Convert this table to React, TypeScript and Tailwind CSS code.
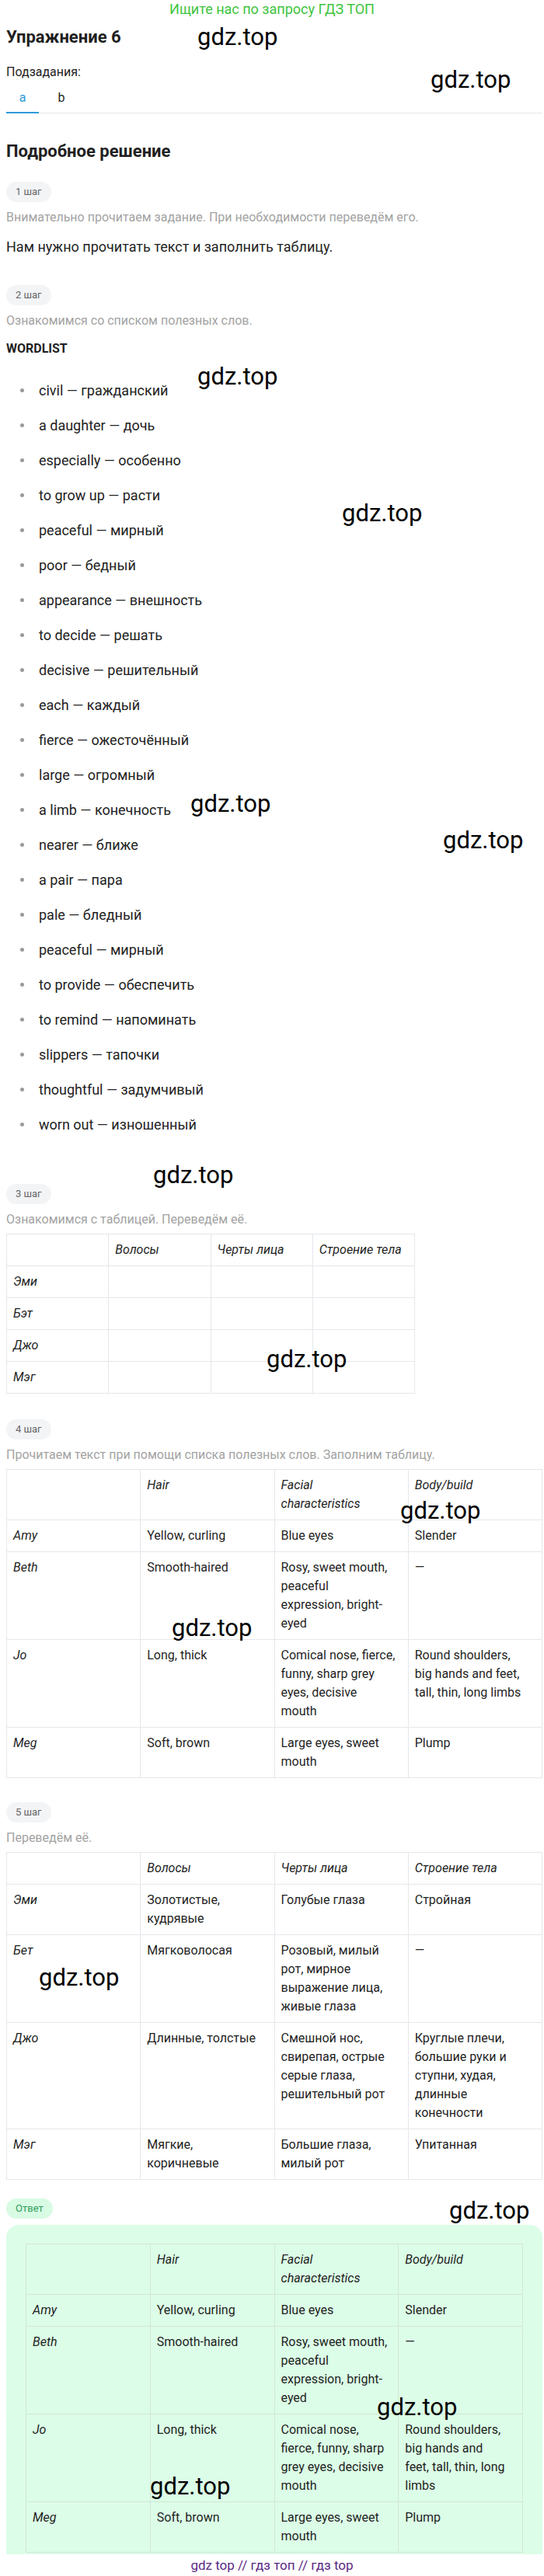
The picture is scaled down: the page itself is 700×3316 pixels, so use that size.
const words = [
  "civil — гражданский",
  "a daughter — дочь",
  "especially — особенно",
  "to grow up — расти",
  "peaceful — мирный",
  "poor — бедный",
  "appearance — внешность",
  "to decide — решать",
  "decisive — решительный",
  "each — каждый",
  "fierce — ожесточённый",
  "large — огромный",
  "a limb — конечность",
  "nearer — ближе",
  "a pair — пара",
  "pale — бледный",
  "peaceful — мирный",
  "to provide — обеспечить",
  "to remind — напоминать",
  "slippers — тапочки",
  "thoughtful — задумчивый",
  "worn out — изношенный",
];

const ruHead = ["", "Волосы", "Черты лица", "Строение тела"];
const enHead = ["", "Hair", "Facial\ncharacteristics", "Body/build"];

const emptyRows = [
  ["Эми", "", "", ""],
  ["Бэт", "", "", ""],
  ["Джо", "", "", ""],
  ["Мэг", "", "", ""],
];

const enRows = [
  ["Amy", "Yellow, curling", "Blue eyes", "Slender"],
  ["Beth", "Smooth-haired", "Rosy, sweet mouth,\npeaceful\nexpression, bright-\neyed", "—"],
  [
    "Jo",
    "Long, thick",
    "Comical nose, fierce,\nfunny, sharp grey\neyes, decisive\nmouth",
    "Round shoulders,\nbig hands and feet,\ntall, thin, long limbs",
  ],
  ["Meg", "Soft, brown", "Large eyes, sweet\nmouth", "Plump"],
];

const ruRows = [
  ["Эми", "Золотистые,\nкудрявые", "Голубые глаза", "Стройная"],
  ["Бет", "Мягковолосая", "Розовый, милый\nрот, мирное\nвыражение лица,\nживые глаза", "—"],
  [
    "Джо",
    "Длинные, толстые",
    "Смешной нос,\nсвирепая, острые\nсерые глаза,\nрешительный рот",
    "Круглые плечи,\nбольшие руки и\nступни, худая,\nдлинные\nконечности",
  ],
  ["Мэг", "Мягкие,\nкоричневые", "Большие глаза,\nмилый рот", "Упитанная"],
];

const answerRows = [
  enRows[0],
  enRows[1],
  [
    "Jo",
    "Long, thick",
    "Comical nose,\nfierce, funny, sharp\ngrey eyes, decisive\nmouth",
    "Round shoulders,\nbig hands and\nfeet, tall, thin, long\nlimbs",
  ],
  enRows[3],
];

// watermark spots: [left, top]
const marks = [
  [254, 32],
  [554, 87],
  [254, 469],
  [440, 645],
  [245, 1019],
  [570, 1066],
  [197, 1497],
  [343, 1734],
  [515, 1929],
  [221, 2080],
  [50, 2530],
  [578, 2830],
  [485, 3083],
  [193, 3185],
];

const Step = ({ label, green }: { label: string; green?: boolean }) => (
  <div className="flex">
    <span
      className={
        green
          ? "inline-flex h-[26px] items-center rounded-full bg-[#d8fbe4] px-3 text-[13px] text-[#2f9e5b]"
          : "inline-flex h-[26px] items-center rounded-full bg-[#f3f4f6] px-3 text-[13px] text-[#666]"
      }
    >
      {label}
    </span>
  </div>
);

const Note = ({ children }: { children: React.ReactNode }) => (
  <p className="mt-2 text-[16px] leading-6 text-[#a3a3a3]">{children}</p>
);

const Table = ({
  head,
  rows,
  className,
  border = "border-[#e5e7eb]",
}: {
  head: string[];
  rows: string[][];
  className?: string;
  border?: string;
}) => {
  const cell = `border ${border} px-2 py-2 align-top text-left text-[16px] leading-6 whitespace-pre-line`;
  return (
    <table className={`table-fixed border-collapse ${className ?? ""}`}>
      <thead>
        <tr>
          {head.map((h, i) => (
            <th key={i} className={`${cell} font-normal italic`}>
              {h}
            </th>
          ))}
        </tr>
      </thead>
      <tbody>
        {rows.map((r, i) => (
          <tr key={i}>
            {r.map((c, j) => (
              <td key={j} className={j === 0 ? `${cell} italic` : cell}>
                {c}
              </td>
            ))}
          </tr>
        ))}
      </tbody>
    </table>
  );
};

export default function App() {
  return (
    <div className="relative min-h-[3316px] w-[700px] bg-white font-[Roboto,sans-serif] text-[#1f1f1f]">
      <p className="h-6 text-center text-[18px] leading-6 text-[#3fc43f]">
        Ищите нас по запросу ГДЗ ТОП
      </p>

      <div className="pl-2 pr-[2px]">
        <h1 className="mt-[10px] text-[22px] font-bold leading-[28px]">Упражнение 6</h1>
        <p className="mt-[19px] text-[16px] leading-6">Подзадания:</p>
        <div className="mt-[9px] flex gap-2 border-b border-[#e5e7eb]">
          <div className="-mb-px w-[42px] border-b-2 border-[#2f9bd8] pb-[6px] text-center text-[16px] leading-6 text-[#2f9bd8]">
            a
          </div>
          <div className="-mb-px w-[42px] border-b-2 border-transparent pb-[6px] text-center text-[16px] leading-6 text-[#222]">
            b
          </div>
        </div>

        <h2 className="mt-[35px] text-[22px] font-bold leading-[28px]">Подробное решение</h2>

        {/* 1 */}
        <div className="mt-[25px]">
          <Step label="1 шаг" />
        </div>
        <Note>Внимательно прочитаем задание. При необходимости переведём его.</Note>
        <p className="mt-3 text-[18px] leading-[27px]">
          Нам нужно прочитать текст и заполнить таблицу.
        </p>

        {/* 2 */}
        <div className="mt-[36px]">
          <Step label="2 шаг" />
        </div>
        <Note>Ознакомимся со списком полезных слов.</Note>
        <p className="mt-3 text-[16px] font-bold leading-6">WORDLIST</p>
        <ul className="mt-[28px] space-y-[18px]">
          {words.map((w, i) => (
            <li key={i} className="flex items-center text-[18px] leading-[27px] text-[#222]">
              <span className="ml-[18px] mr-[19px] h-[5px] w-[5px] rounded-full bg-[#9a9a9a]" />
              {w}
            </li>
          ))}
        </ul>

        {/* 3 */}
        <div className="mt-[63px]">
          <Step label="3 шаг" />
        </div>
        <Note>Ознакомимся с таблицей. Переведём её.</Note>
        <Table head={ruHead} rows={emptyRows} className="mt-[6px] w-[526px]" />

        {/* 4 */}
        <div className="mt-[33px]">
          <Step label="4 шаг" />
        </div>
        <Note>Прочитаем текст при помощи списка полезных слов. Заполним таблицу.</Note>
        <Table head={enHead} rows={enRows} className="mt-[6px] w-full" />

        {/* 5 */}
        <div className="mt-[31px]">
          <Step label="5 шаг" />
        </div>
        <Note>Переведём её.</Note>
        <Table head={ruHead} rows={ruRows} className="mt-[6px] w-full" />

        {/* answer */}
        <div className="mt-[24px]">
          <Step label="Ответ" green />
        </div>
        <div className="mt-2 rounded-t-[16px] bg-[#dcfde7] px-[25px] pb-[2px] pt-[24px]">
          <Table head={enHead} rows={answerRows} className="w-full" border="border-[#d3e6da]" />
        </div>
      </div>

      <p className="h-[28px] text-center text-[17px] leading-[28px] text-[#5b2a86]">
        gdz top // гдз топ // гдз top
      </p>

      {marks.map(([x, y], i) => (
        <span
          key={i}
          className="pointer-events-none absolute text-[31px] leading-none text-black"
          style={{ left: x, top: y }}
        >
          gdz.top
        </span>
      ))}
    </div>
  );
}
